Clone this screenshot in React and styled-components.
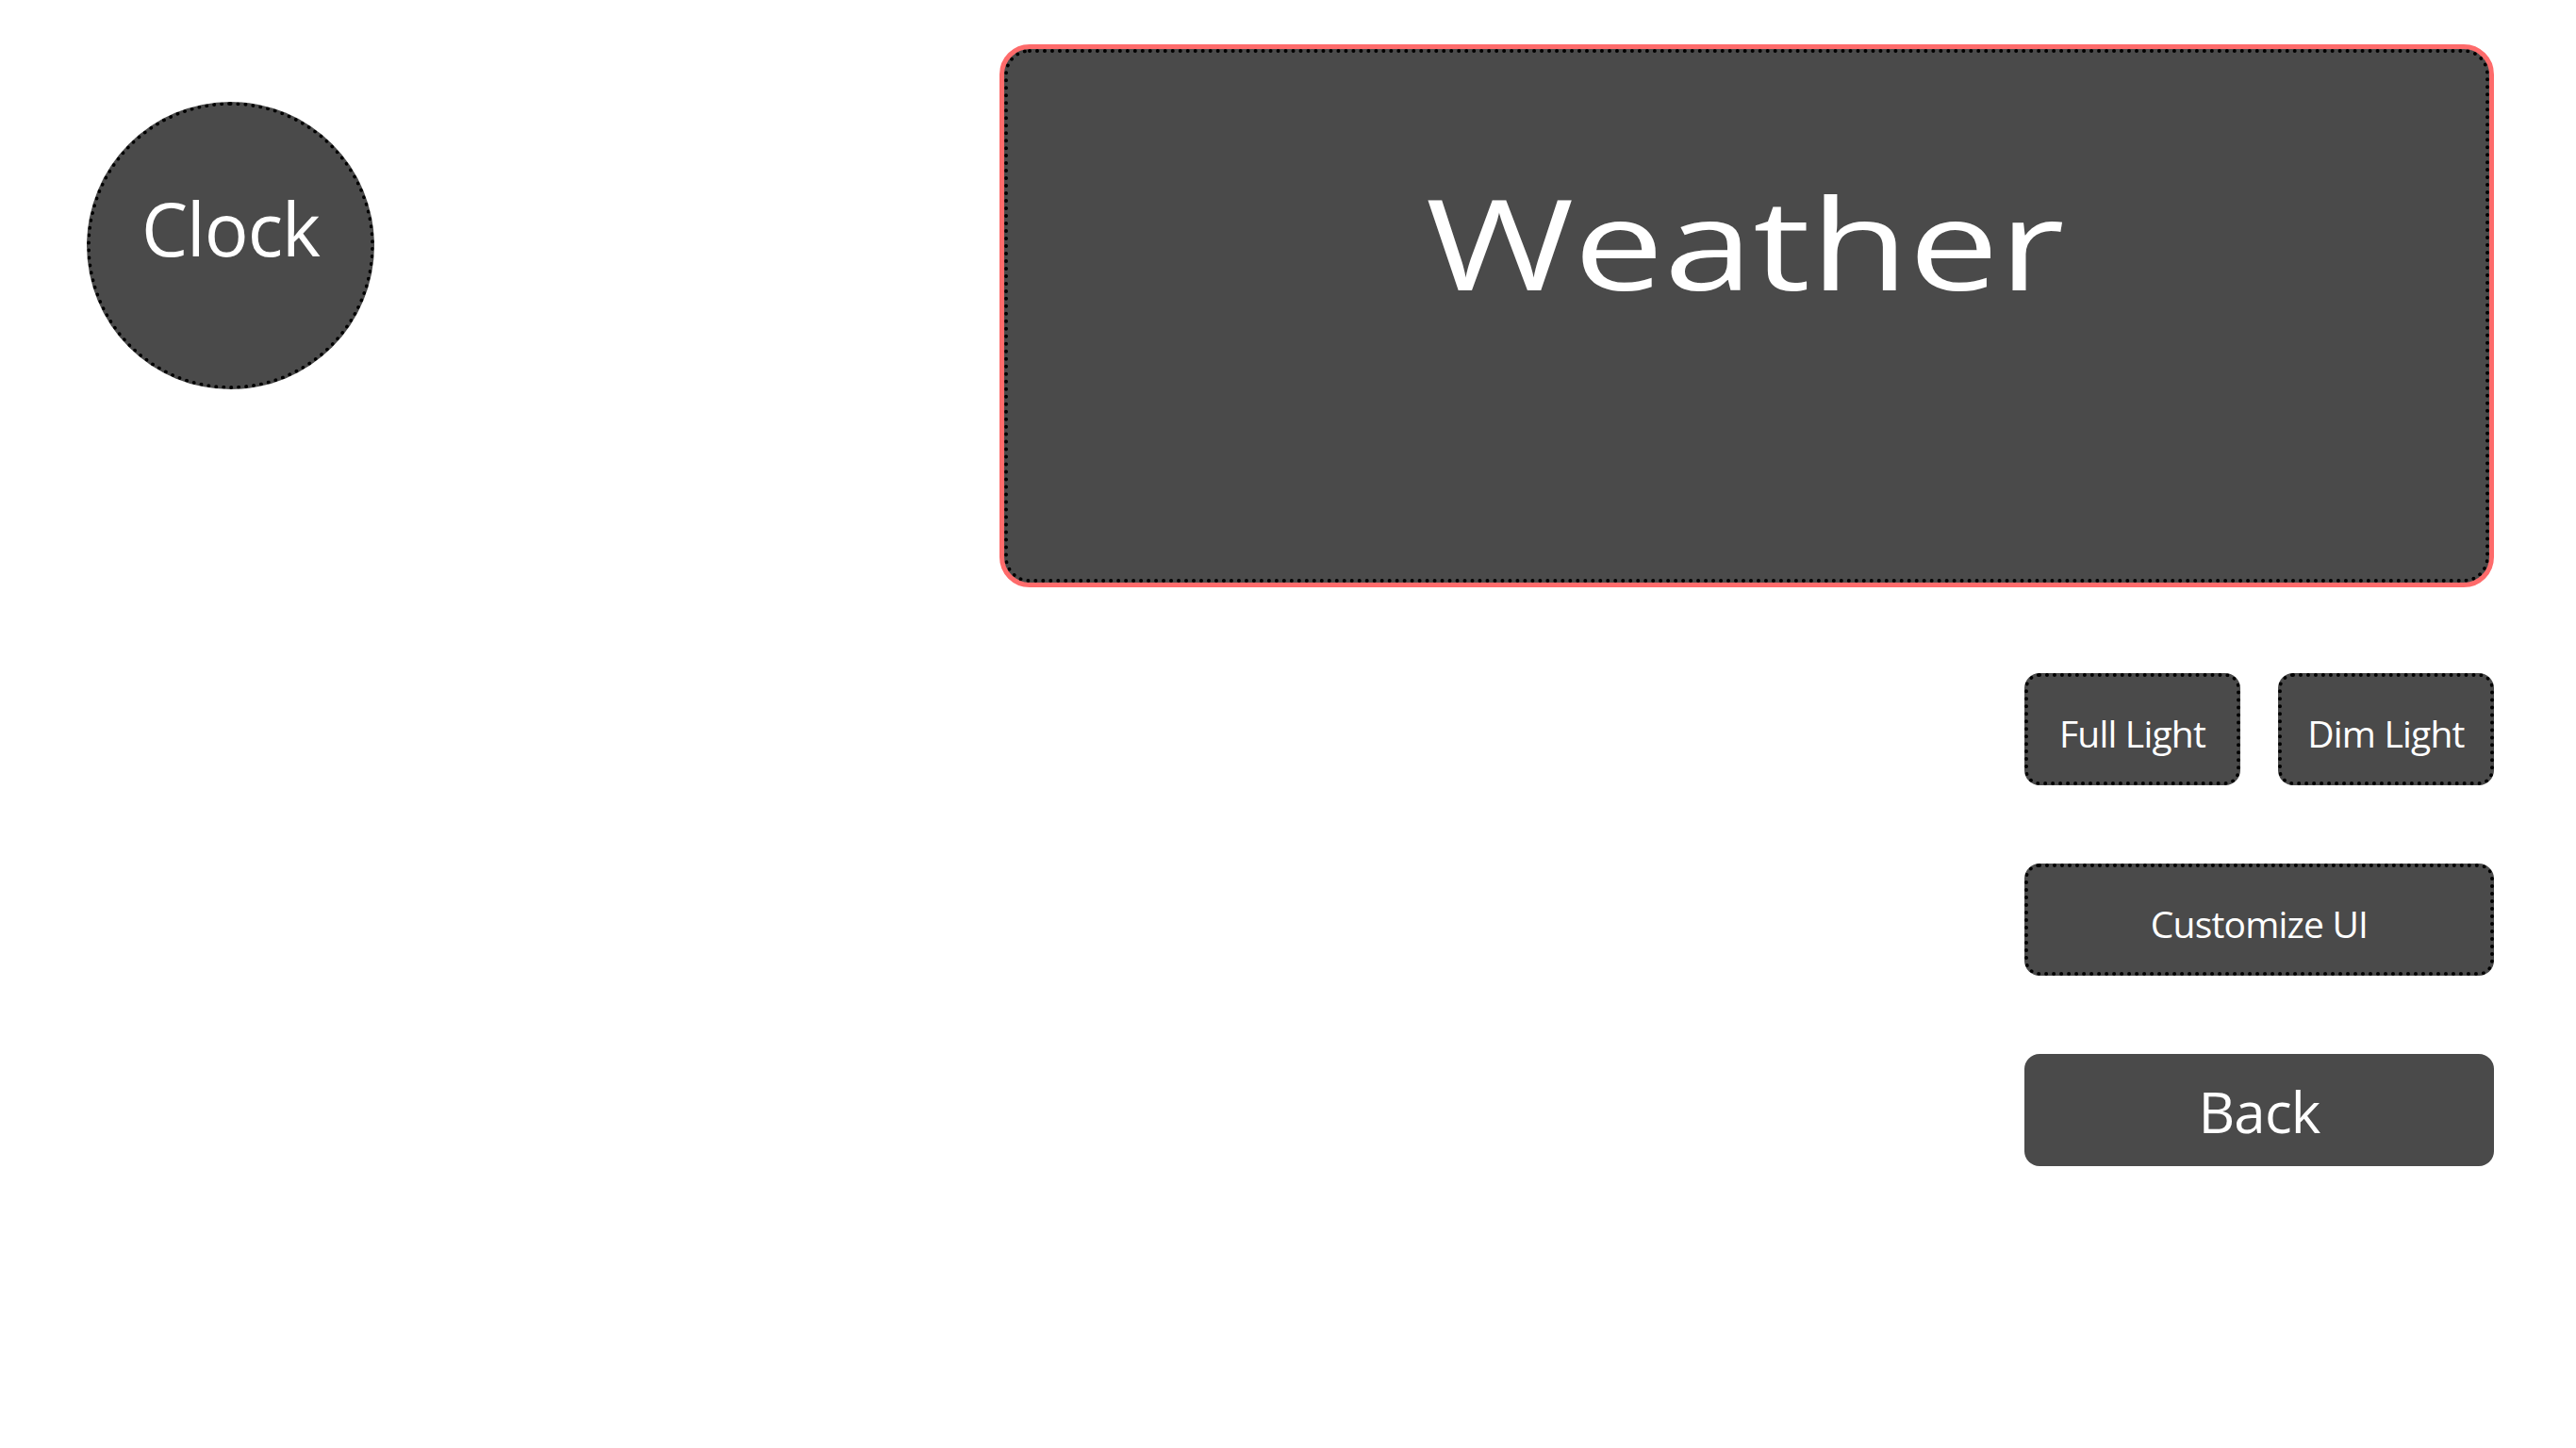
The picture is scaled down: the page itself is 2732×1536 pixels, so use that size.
import React from 'react';
import styled, { createGlobalStyle } from 'styled-components';

const GlobalStyle = createGlobalStyle`
  html, body {
    margin: 0;
    padding: 0;
    background: #ffffff;
    font-family: "Open Sans", "Noto Sans", sans-serif;
  }
`;

const Page = styled.div`
  width: 2732px;
  height: 1536px;
  box-sizing: border-box;
  display: flex;
  justify-content: space-between;
  align-items: flex-start;
  padding: 47px 87px 0 92px;
  background: #ffffff;
`;

const Clock = styled.div`
  margin-top: 61px;
  width: 305px;
  height: 305px;
  box-sizing: border-box;
  border-radius: 50%;
  background: #4a4a4a;
  border: 4px dotted #000;
  display: flex;
  align-items: center;
  justify-content: center;
  padding-bottom: 38px;
  color: #fff;
  font-size: 78px;
  letter-spacing: -1px;
`;

const RightColumn = styled.div`
  display: flex;
  flex-direction: column;
  align-items: flex-end;
`;

const WeatherFrame = styled.div`
  width: 1585px;
  height: 576px;
  box-sizing: border-box;
  border: 5px solid #fe6b6b;
  border-radius: 32px;
  background: #4a4a4a;
`;

const WeatherInner = styled.div`
  height: 100%;
  box-sizing: border-box;
  border: 4px dotted #000;
  border-radius: 27px;
  display: flex;
  justify-content: center;
  padding-top: 134px;
`;

const WeatherLabel = styled.span`
  display: inline-block;
  color: #fff;
  font-size: 133px;
  line-height: 1;
  transform: scaleX(1.28);
  margin-left: -4px;
`;

const Controls = styled.div`
  margin-top: 91px;
  width: 498px;
  display: flex;
  flex-direction: column;
  gap: 83px;
`;

const Row = styled.div`
  display: flex;
  justify-content: space-between;
`;

const Button = styled.div`
  width: ${p => (p.$half ? '229px' : '100%')};
  height: 119px;
  box-sizing: border-box;
  background: #4a4a4a;
  border: ${p => (p.$plain ? 'none' : '4px dotted #000')};
  border-radius: 16px;
  display: flex;
  align-items: center;
  justify-content: center;
  padding-top: ${p => (p.$plain ? '2px' : '8px')};
  color: #fff;
  font-size: ${p => p.$size || 39}px;
  letter-spacing: -0.8px;
`;

export default function App() {
  return (
    <>
      <GlobalStyle />
      <Page>
        <Clock>Clock</Clock>
        <RightColumn>
          <WeatherFrame>
            <WeatherInner>
              <WeatherLabel>Weather</WeatherLabel>
            </WeatherInner>
          </WeatherFrame>
          <Controls>
            <Row>
              <Button $half>Full Light</Button>
              <Button $half>Dim Light</Button>
            </Row>
            <Button>Customize UI</Button>
            <Button $plain $size={60}>Back</Button>
          </Controls>
        </RightColumn>
      </Page>
    </>
  );
}
